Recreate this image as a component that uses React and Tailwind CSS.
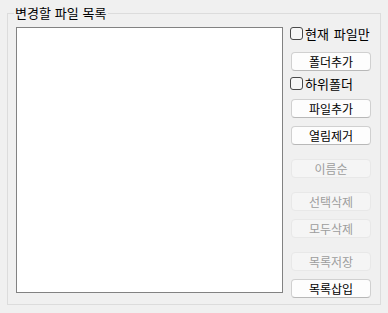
import React from "react";

const font = { fontFamily: '"Noto Sans CJK KR", "Noto Sans", sans-serif' };

function Check({ label, className }) {
  return (
    <div className={"flex items-center h-[13px] " + className}>
      <div className="w-[13px] h-[13px] border border-[#4a4a4a] rounded-[3px] bg-[#f7f7f7] shrink-0" />
      <span className="ml-[2px] text-[13px] leading-[13px] [word-spacing:2px] text-black whitespace-nowrap">{label}</span>
    </div>
  );
}

function Btn({ label, disabled, className }) {
  return (
    <div
      className={
        "ml-[1px] w-[80px] h-[19px] rounded-[4px] flex items-center justify-center text-[12px] leading-none whitespace-nowrap " +
        (disabled
          ? "bg-[#f5f5f5] border border-[#e8e8e8] text-[#9d9d9d] "
          : "bg-[#fdfdfd] border border-[#d0d0d0] border-b-[#b8b8b8] text-black ") +
        className
      }
    >
      {label}
    </div>
  );
}

export default function App() {
  return (
    <div className="w-[388px] h-[313px] bg-[#f0f0f0] overflow-hidden pt-[13px] pl-[7px]" style={font}>
      <div className="relative w-[374px] h-[292px] border border-[#dcdcdc] flex pl-[8px] pt-[13px] gap-[7px]">
        <span className="absolute left-[6px] top-[-10px] px-[1px] bg-[#f0f0f0] text-[13px] leading-[18px] [word-spacing:1px] text-black whitespace-nowrap">
          변경할 파일 목록
        </span>
        <div className="w-[267px] h-[266px] border border-[#828282] bg-white shrink-0" />
        <div className="flex flex-col">
          <Check label="현재 파일만" />
          <Btn label="폴더추가" className="mt-[12px]" />
          <Check label="하위폴더" className="mt-[6px]" />
          <Btn label="파일추가" className="mt-[9px]" />
          <Btn label="열림제거" className="mt-[8px]" />
          <Btn label="이름순" disabled className="mt-[14px]" />
          <Btn label="선택삭제" disabled className="mt-[14px]" />
          <Btn label="모두삭제" disabled className="mt-[8px]" />
          <Btn label="목록저장" disabled className="mt-[14px]" />
          <Btn label="목록삽입" className="mt-[8px]" />
        </div>
      </div>
    </div>
  );
}
